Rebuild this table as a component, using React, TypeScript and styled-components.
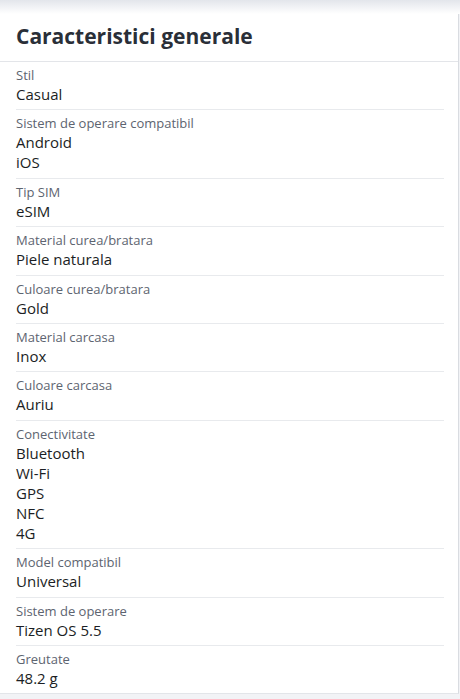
import React from 'react'
import styled, { createGlobalStyle } from 'styled-components'

const GlobalStyle = createGlobalStyle`
  html, body {
    margin: 0;
    padding: 0;
    background: #ffffff;
    font-family: 'Open Sans', 'Noto Sans', sans-serif;
  }
`

const Page = styled.div`
  width: 460px;
  height: 699px;
  overflow: hidden;
  background: #f2f3f6;
  display: flex;
  flex-direction: column;
`

const TopShade = styled.div`
  height: 14px;
  flex: none;
  background: linear-gradient(
    to bottom,
    rgba(225, 228, 234, 0.9),
    rgba(255, 255, 255, 1)
  );
`

const Card = styled.section`
  width: 458px;
  background: #fff;
  border-right: 1px solid #d9dce1;
  border-bottom: 1px solid #e3e5e9;
  flex: none;
`

const Title = styled.h2`
  margin: 0;
  padding: 7px 16px 9px;
  font-size: 21px;
  line-height: 31px;
  font-weight: 700;
  color: #2a2f38;
  border-bottom: 1px solid #e3e5e9;
`

const List = styled.div`
  display: flex;
  flex-direction: column;
`

const Row = styled.div<{ $last?: boolean }>`
  margin: 0 14px 0 16px;
  padding: 3px 0 4.4px;
  border-bottom: ${(p) => (p.$last ? 'none' : '1px solid #e8eaed')};
`

const Label = styled.div`
  font-size: 13px;
  line-height: 20px;
  color: #5d6470;
`

const Value = styled.div`
  font-size: 15px;
  line-height: 20px;
  color: #1b1e24;
  margin-top: -1px;
  margin-bottom: 1px;
`

const specs: { label: string; values: string[] }[] = [
  { label: 'Stil', values: ['Casual'] },
  { label: 'Sistem de operare compatibil', values: ['Android', 'iOS'] },
  { label: 'Tip SIM', values: ['eSIM'] },
  { label: 'Material curea/bratara', values: ['Piele naturala'] },
  { label: 'Culoare curea/bratara', values: ['Gold'] },
  { label: 'Material carcasa', values: ['Inox'] },
  { label: 'Culoare carcasa', values: ['Auriu'] },
  { label: 'Conectivitate', values: ['Bluetooth', 'Wi-Fi', 'GPS', 'NFC', '4G'] },
  { label: 'Model compatibil', values: ['Universal'] },
  { label: 'Sistem de operare', values: ['Tizen OS 5.5'] },
  { label: 'Greutate', values: ['48.2 g'] },
]

const App = () => (
  <>
    <GlobalStyle />
    <Page>
      <TopShade />
      <Card>
        <Title>Caracteristici generale</Title>
        <List>
          {specs.map((s, i) => (
            <Row key={s.label} $last={i === specs.length - 1}>
              <Label>{s.label}</Label>
              {s.values.map((v) => (
                <Value key={v}>{v}</Value>
              ))}
            </Row>
          ))}
        </List>
      </Card>
    </Page>
  </>
)

export default App
